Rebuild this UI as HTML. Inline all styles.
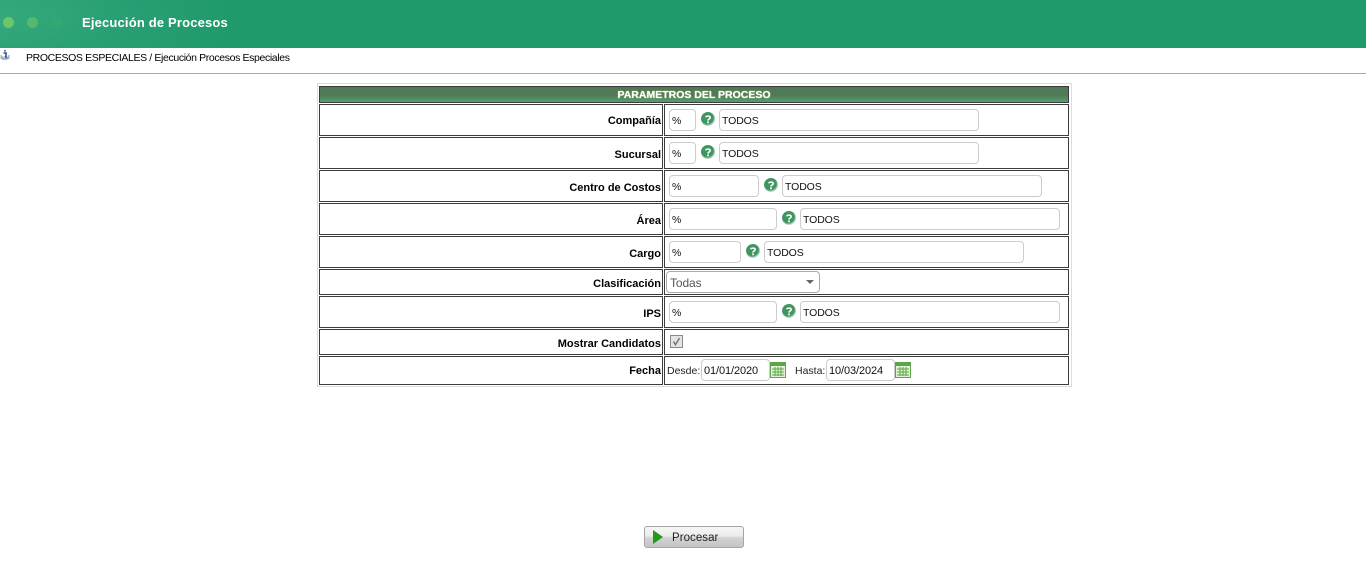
<!DOCTYPE html>
<html lang="es">
<head>
<meta charset="utf-8">
<title>Ejecución de Procesos</title>
<style>
html,body{margin:0;padding:0;background:#fff;width:1366px;height:573px;overflow:hidden}
body{font-family:"Liberation Sans",sans-serif;font-size:11px;color:#000;position:relative}
div,span{position:absolute;box-sizing:border-box;white-space:nowrap}
#hd{left:0;top:0;width:1366px;height:48px;background:radial-gradient(ellipse 240px 90px at 0 35%,#35a97c 0,#279f72 55%,#1f9a6b 100%)}
#ttl{left:82px;top:15px;font-size:13px;font-weight:bold;color:#fff;letter-spacing:.17px;line-height:16px}
.dot{border-radius:50%;width:11px;height:11px;top:17px}
#crumb{left:26px;top:52px;line-height:13px;font-size:10.5px;letter-spacing:-.37px}
#ln{left:0;top:73px;width:1366px;height:1px;background:#a8a8a8}
#outer{left:317px;top:83px;width:755px;height:304px;border:1px solid #ddd}
#th{left:319px;top:86px;width:750px;height:17px;border:1px solid #3c3c3c;background:linear-gradient(#4f7a55 0,#4f7a55 55%,#55a070 100%);color:#fff;font-weight:bold;text-align:center;line-height:17px;font-size:10.5px;text-shadow:0 0 1px #ffffc0}
.c{border:1px solid #3c3c3c;background:#fff}
.l{left:319px;width:344px}
.v{left:664px;width:405px}
.t{right:705px;font-weight:bold;font-size:11px;line-height:14px;letter-spacing:.0px}
.i{height:22px;border:1px solid #ccc;border-radius:4px;background:#fff;padding-left:2px;line-height:23px;font-size:10.5px;color:#111;letter-spacing:-.1px}
.q{width:14px;height:14px}
.d{font-size:10.5px;line-height:14px;color:#222}
</style>
</head>
<body>
<div id="hd"></div>
<div class="dot" style="left:3px;background:#6cc66a"></div>
<div class="dot" style="left:27px;background:#55b96b"></div>
<div class="dot" style="left:52px;background:#33a873"></div>
<div id="ttl">Ejecución de Procesos</div>
<svg style="position:absolute;left:0;top:49px" width="11" height="12" viewBox="0 0 11 12"><ellipse cx="5" cy="9" rx="5" ry="2" fill="#c5cbd6"/><path d="M5 1v1.5M3.5 4H6v5" stroke="#2c4f8f" stroke-width="1.6" fill="none"/><path d="M1 6c0 3 2 4 4 4s4-1 4-4" stroke="#8b9ab8" fill="none"/></svg>
<div id="crumb">PROCESOS ESPECIALES / Ejecución Procesos Especiales</div>
<div id="ln"></div>

<div id="outer"></div>
<div id="th">PARAMETROS DEL PROCESO</div>

<div class="c l" style="top:104px;height:32px"></div><div class="c v" style="top:104px;height:32px"></div>
<div class="c l" style="top:137px;height:32px"></div><div class="c v" style="top:137px;height:32px"></div>
<div class="c l" style="top:170px;height:32px"></div><div class="c v" style="top:170px;height:32px"></div>
<div class="c l" style="top:203px;height:32px"></div><div class="c v" style="top:203px;height:32px"></div>
<div class="c l" style="top:236px;height:32px"></div><div class="c v" style="top:236px;height:32px"></div>
<div class="c l" style="top:269px;height:26px"></div><div class="c v" style="top:269px;height:26px"></div>
<div class="c l" style="top:296px;height:32px"></div><div class="c v" style="top:296px;height:32px"></div>
<div class="c l" style="top:329px;height:26px"></div><div class="c v" style="top:329px;height:26px"></div>
<div class="c l" style="top:356px;height:29px"></div><div class="c v" style="top:356px;height:29px"></div>

<div class="t" style="top:114px">Compañía</div>
<div class="t" style="top:148px">Sucursal</div>
<div class="t" style="top:181px">Centro de Costos</div>
<div class="t" style="top:214px">Área</div>
<div class="t" style="top:247px">Cargo</div>
<div class="t" style="top:277px">Clasificación</div>
<div class="t" style="top:307px">IPS</div>
<div class="t" style="top:337px">Mostrar Candidatos</div>
<div class="t" style="top:364px">Fecha</div>

<svg width="0" height="0" style="position:absolute"><defs><radialGradient id="g" cx=".45" cy=".42" r=".58"><stop offset="0" stop-color="#3a9a5c"/><stop offset=".72" stop-color="#3f9462"/><stop offset="1" stop-color="#d5e9da"/></radialGradient><symbol id="qm" viewBox="0 0 14 14"><circle cx="7" cy="7" r="7" fill="url(#g)"/><path d="M4.8 5.3C5 3.8 9.2 3.6 9.2 5.6 9.2 7 7 6.9 7 8.6" fill="none" stroke="#fff" stroke-width="1.6"/><rect x="6.1" y="9.5" width="1.8" height="1.7" fill="#fff"/></symbol></defs></svg>

<div class="i" style="left:669px;top:109px;width:27px">%</div>
<svg class="q" style="position:absolute;left:701px;top:112px" width="14" height="14"><use href="#qm"/></svg>
<div class="i" style="left:719px;top:109px;width:260px">TODOS</div>

<div class="i" style="left:669px;top:142px;width:27px">%</div>
<svg class="q" style="position:absolute;left:701px;top:145px" width="14" height="14"><use href="#qm"/></svg>
<div class="i" style="left:719px;top:142px;width:260px">TODOS</div>

<div class="i" style="left:669px;top:175px;width:90px">%</div>
<svg class="q" style="position:absolute;left:764px;top:178px" width="14" height="14"><use href="#qm"/></svg>
<div class="i" style="left:782px;top:175px;width:260px">TODOS</div>

<div class="i" style="left:669px;top:208px;width:108px">%</div>
<svg class="q" style="position:absolute;left:782px;top:211px" width="14" height="14"><use href="#qm"/></svg>
<div class="i" style="left:800px;top:208px;width:260px">TODOS</div>

<div class="i" style="left:669px;top:241px;width:72px">%</div>
<svg class="q" style="position:absolute;left:746px;top:244px" width="14" height="14"><use href="#qm"/></svg>
<div class="i" style="left:764px;top:241px;width:260px">TODOS</div>

<div class="i" style="left:666px;top:271px;width:154px;border-color:#aaa;color:#555;font-size:12px;padding-left:3px">Todas</div>
<svg style="position:absolute;left:806px;top:280px" width="9" height="5"><path d="M0 0h8L4 4z" fill="#666"/></svg>

<div class="i" style="left:669px;top:301px;width:108px">%</div>
<svg class="q" style="position:absolute;left:782px;top:304px" width="14" height="14"><use href="#qm"/></svg>
<div class="i" style="left:800px;top:301px;width:260px">TODOS</div>

<svg style="position:absolute;left:670px;top:335px" width="13" height="13"><rect x=".5" y=".5" width="12" height="12" fill="#e4e4e4" stroke="#8a8a8a"/><path d="M3.5 6.5l2 3.2L9.5 3" fill="none" stroke="#777" stroke-width="1.5"/></svg>

<div class="d" style="left:667px;top:364px">Desde:</div>
<div class="i" style="left:701px;top:359px;width:69px;font-size:11px">01/01/2020</div>
<svg style="position:absolute;left:770px;top:362px" width="16" height="16"><rect x=".5" y=".5" width="15" height="15" fill="#e6f2d8" stroke="#5aa648"/><rect x="1" y="1" width="14" height="3" fill="#5aa648"/><path d="M2 7h12M2 10h12M2 13h12M5 5v9M8 5v9M11 5v9" stroke="#5aa648" fill="none"/></svg>
<div class="d" style="left:795px;top:364px">Hasta:</div>
<div class="i" style="left:826px;top:359px;width:69px;font-size:11px">10/03/2024</div>
<svg style="position:absolute;left:895px;top:362px" width="16" height="16"><rect x=".5" y=".5" width="15" height="15" fill="#e6f2d8" stroke="#5aa648"/><rect x="1" y="1" width="14" height="3" fill="#5aa648"/><path d="M2 7h12M2 10h12M2 13h12M5 5v9M8 5v9M11 5v9" stroke="#5aa648" fill="none"/></svg>

<div style="left:644px;top:526px;width:100px;height:22px;border:1px solid #a5a5a5;border-radius:3px;background:linear-gradient(#f6f6f6 0,#ececec 45%,#d2d2d2 55%,#c4c4c4 100%)"></div>
<svg style="position:absolute;left:653px;top:530px" width="11" height="14"><path d="M0 0l10 7L0 14z" fill="#1f9a1f"/></svg>
<div style="left:672px;top:531px;line-height:15px;font-size:11.5px;color:#222;letter-spacing:.05px">Procesar</div>
</body>
</html>
